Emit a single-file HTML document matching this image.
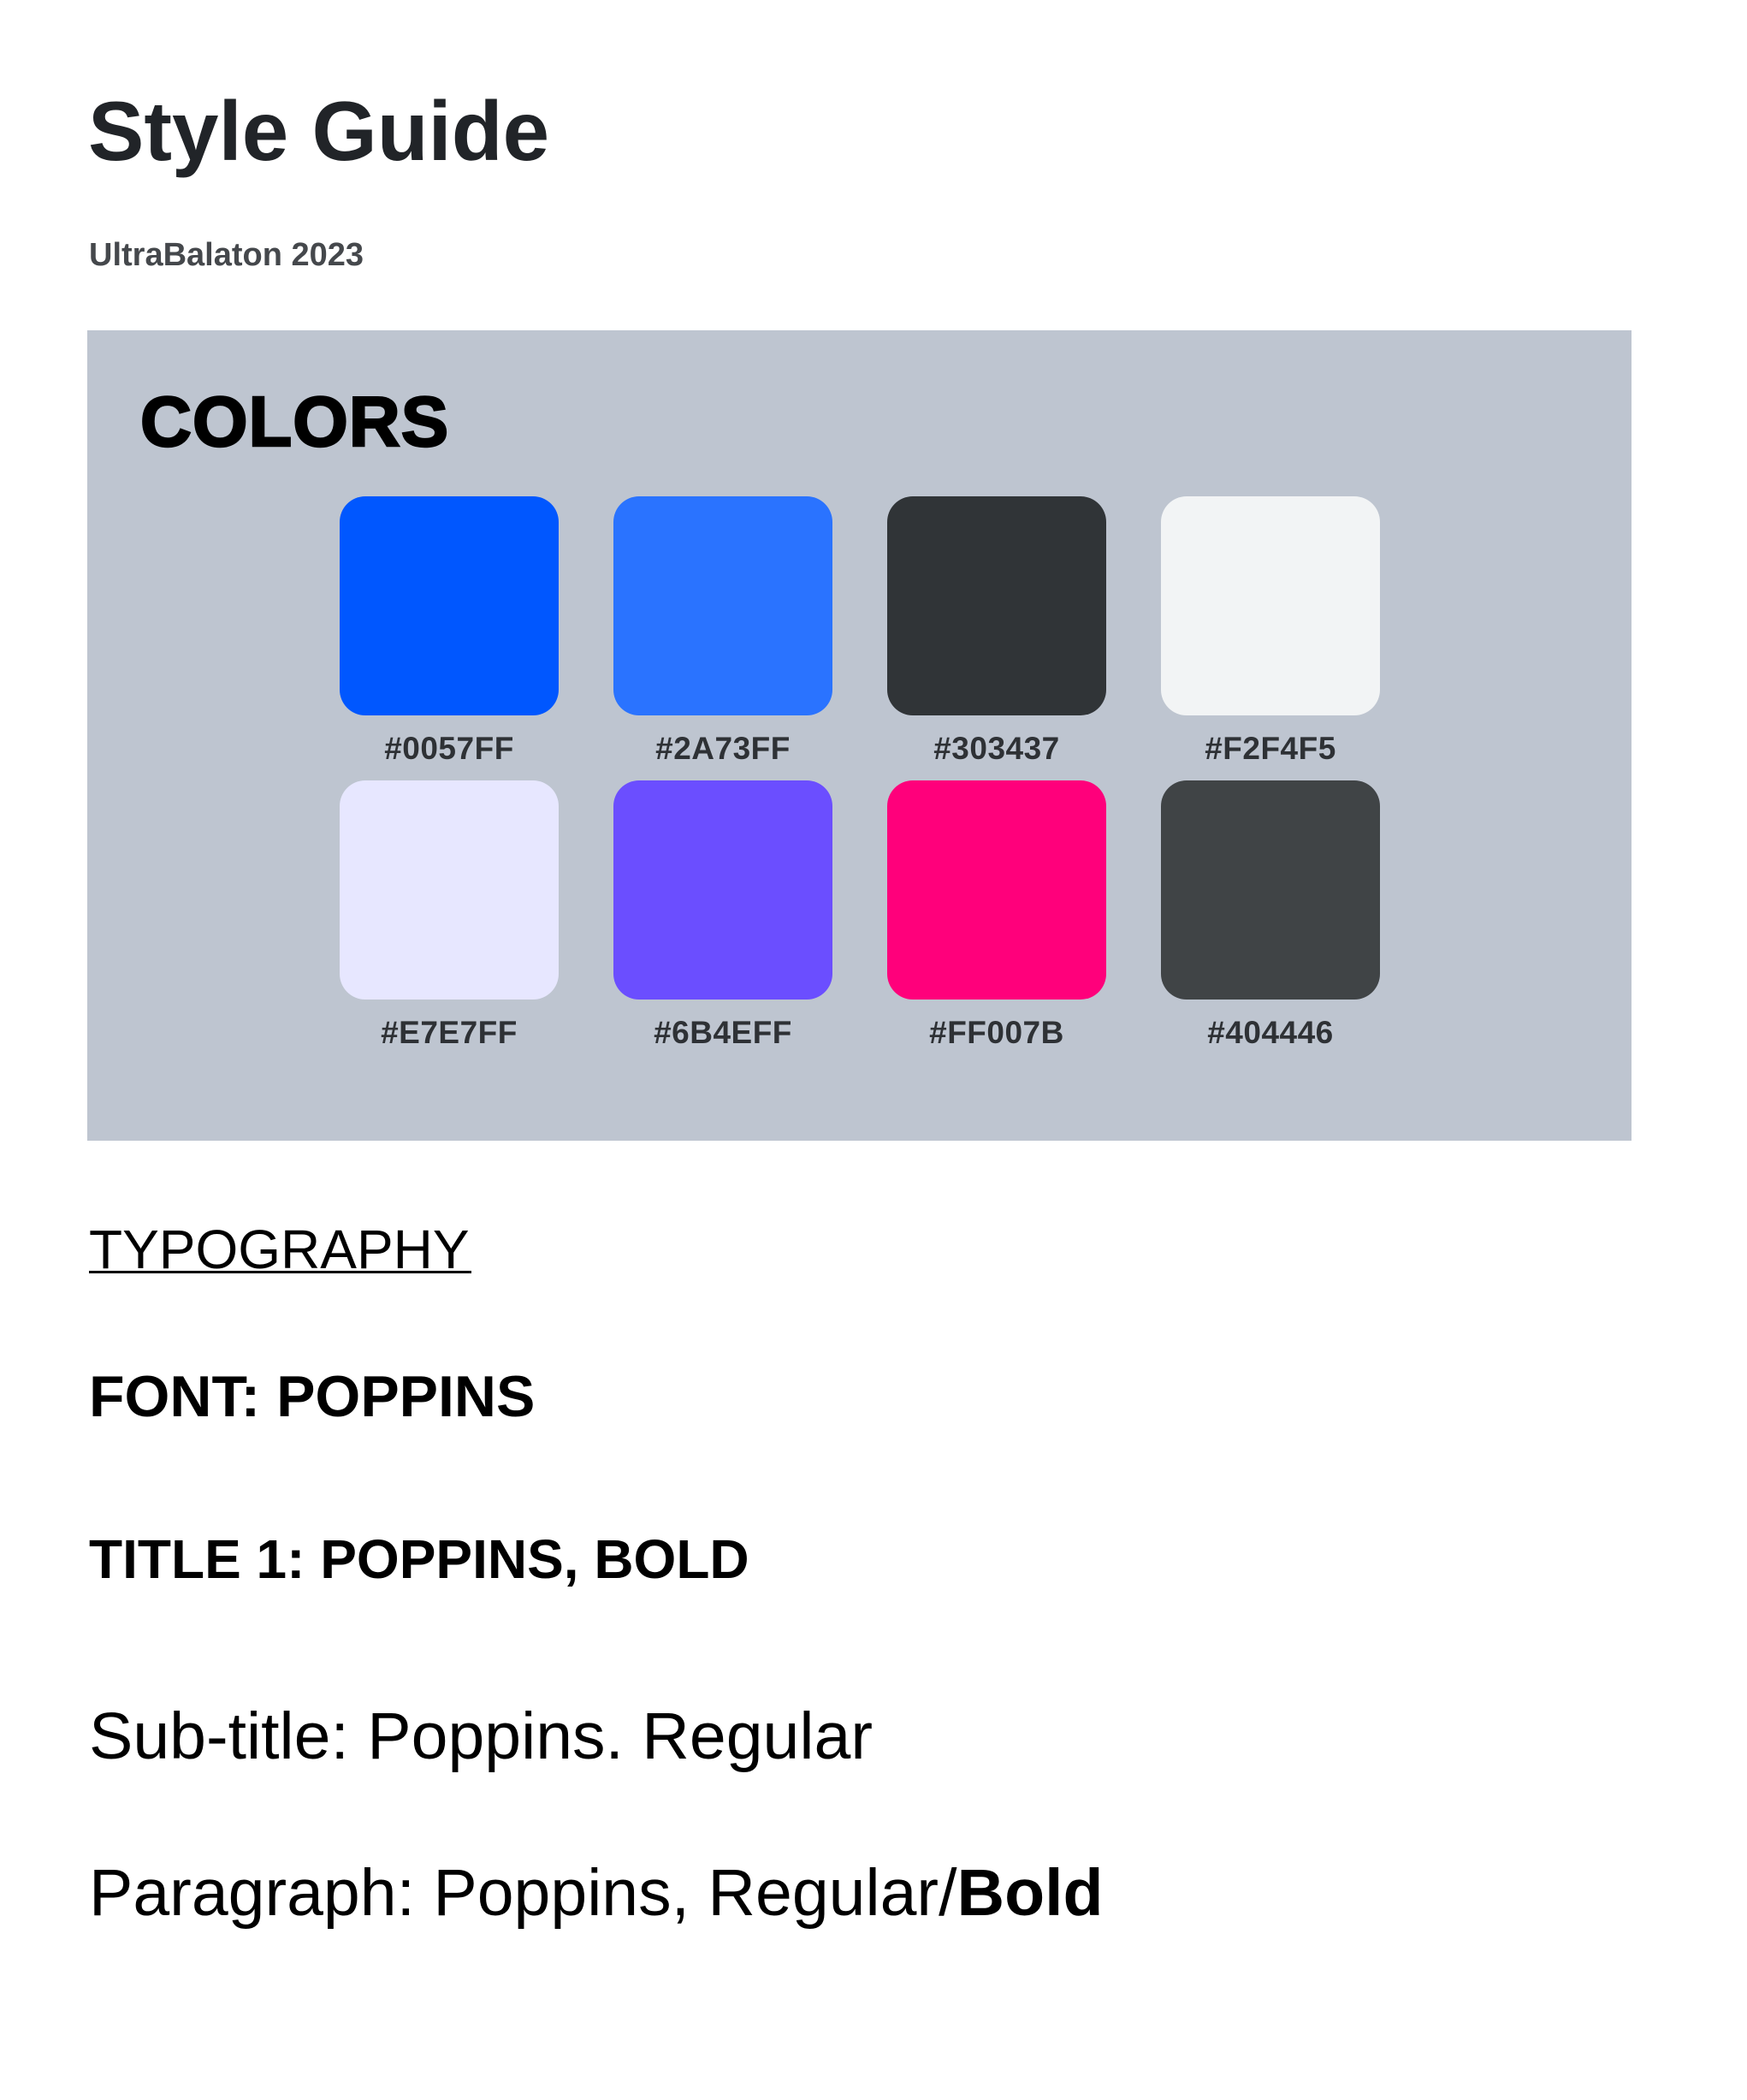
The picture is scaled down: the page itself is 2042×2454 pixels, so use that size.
<!DOCTYPE html>
<html><head><meta charset="utf-8"><style>
html,body{margin:0;padding:0;background:#fff;}
body{width:2042px;height:2454px;position:relative;overflow:hidden;font-family:"Liberation Sans",sans-serif;color:#000;}
.t{position:absolute;line-height:1;white-space:nowrap;}
.panel{position:absolute;left:102px;top:386px;width:1805px;height:947px;background:#BEC5D0;}
.sw{position:absolute;width:256px;height:256px;border-radius:30px;}
.lb{position:absolute;width:256px;text-align:center;font-weight:bold;font-size:37px;letter-spacing:0.5px;line-height:1;color:#2e3135;}
</style></head><body>
<div class="t" style="left:103px;top:104px;font-size:98px;font-weight:bold;color:#212428;">Style Guide</div>
<div class="t" style="left:104px;top:279px;font-size:38px;font-weight:bold;color:#45484c;">UltraBalaton 2023</div>
<div class="panel"></div>
<div class="t" style="left:164px;top:451px;font-size:83px;font-weight:bold;letter-spacing:1px;-webkit-text-stroke:2.5px #000;">COLORS</div>

<div class="sw" style="left:397px;top:580px;background:#0057FF"></div>
<div class="sw" style="left:717px;top:580px;background:#2A73FF"></div>
<div class="sw" style="left:1037px;top:580px;background:#303437"></div>
<div class="sw" style="left:1357px;top:580px;background:#F2F4F5"></div>
<div class="lb" style="left:397px;top:856px">#0057FF</div>
<div class="lb" style="left:717px;top:856px">#2A73FF</div>
<div class="lb" style="left:1037px;top:856px">#303437</div>
<div class="lb" style="left:1357px;top:856px">#F2F4F5</div>

<div class="sw" style="left:397px;top:912px;background:#E7E7FF"></div>
<div class="sw" style="left:717px;top:912px;background:#6B4EFF"></div>
<div class="sw" style="left:1037px;top:912px;background:#FF007B"></div>
<div class="sw" style="left:1357px;top:912px;background:#404446"></div>
<div class="lb" style="left:397px;top:1188px">#E7E7FF</div>
<div class="lb" style="left:717px;top:1188px">#6B4EFF</div>
<div class="lb" style="left:1037px;top:1188px">#FF007B</div>
<div class="lb" style="left:1357px;top:1188px">#404446</div>

<div class="t" style="left:104px;top:1428px;font-size:64px;">TYPOGRAPHY</div>
<div style="position:absolute;left:104px;top:1485px;width:447px;height:3px;background:#000"></div>
<div class="t" style="left:104px;top:1598px;font-size:68px;font-weight:bold;">FONT: POPPINS</div>
<div class="t" style="left:104px;top:1790px;font-size:64px;font-weight:bold;">TITLE 1: POPPINS, BOLD</div>
<div class="t" style="left:104px;top:1991px;font-size:77px;">Sub-title: Poppins. Regular</div>
<div class="t" style="left:104px;top:2174px;font-size:77px;">Paragraph: Poppins, Regular/<b>Bold</b></div>
</body></html>
